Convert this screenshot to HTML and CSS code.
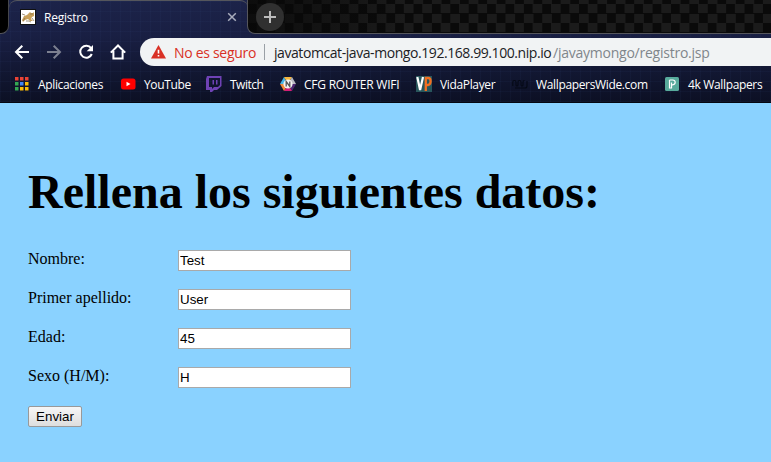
FILE: index.html
```html
<!DOCTYPE html>
<html lang="es">
<head>
<meta charset="utf-8">
<title>Registro</title>
<link rel="stylesheet" href="styles.css">
</head>
<body>
<header class="browser">
  <div class="tabstrip">
    <div class="corner left"></div>
    <div class="tab">
      <svg class="favicon" width="16" height="16" viewBox="0 0 16 16"><path fill="#111" d="M0 0h16v16H0z"/><path fill="#fff" d="M1 1h14v14H1z"/><path fill="#c9a15b" d="M2 11l2-4 3-1 2-2 1-1 1 1h2l1-1v4l-2 1-1 2 2 2h-3l-2-2-3 1-2 2z"/><path stroke="#7c6a4c" stroke-width=".7" fill="none" d="M2 5l3 1M5 9l-2 3M10 5h3M6 12h3l2 1M12 9l2 3"/></svg>
      <span class="tab-title">Registro</span>
      <svg class="close" width="10" height="10" viewBox="0 0 10 10"><path d="M1.2 1.2l7.6 7.6M8.8 1.2L1.2 8.8" stroke="#a9adbd" stroke-width="1.5"/></svg>
    </div>
    <div class="corner right"></div>
    <div class="newtab"><svg width="12" height="12" viewBox="0 0 12 12"><path d="M6 0v12M0 6h12" stroke="#bcbcbc" stroke-width="2"/></svg></div>
  </div>
  <div class="toolbar">
    <svg class="nav" width="16" height="16" viewBox="0 0 16 16"><path d="M15 8H2.5M8.3 1.7L2 8l6.3 6.3"/></svg>
    <svg class="nav dim" width="16" height="16" viewBox="0 0 16 16"><path d="M1 8h12.5M7.7 1.7L14 8l-6.3 6.3"/></svg>
    <svg class="nav" width="16" height="16" viewBox="0 0 16 16"><path d="M13.1 4.2A6 6 0 1 0 13.8 10"/><path class="solid" d="M15 1v6.3H8.7z"/></svg>
    <svg class="nav" width="16" height="16" viewBox="0 0 16 16"><path d="M.8 8.6L8 1.5l7.2 7.1M3.4 7v7.6h9.2V7"/></svg>
    <div class="omnibox">
      <svg class="warn" width="15" height="14" viewBox="0 0 15 14"><path fill="#d93025" d="M7.5 0L15 13.5H0z"/><path stroke="#fff" stroke-width="1.6" d="M7.5 4.8v3.6M7.5 10v1.6"/></svg>
      <span class="insecure">No es seguro</span>
      <span class="rule"></span>
      <span class="host">javatomcat-java-mongo.192.168.99.100.nip.io</span><span class="path">/javaymongo/registro.jsp</span>
    </div>
  </div>
  <nav class="bookmarks">
    <div class="bm"><svg width="16" height="16" viewBox="0 0 16 16"><path fill="#ea4335" d="M1 1h3.5v3.5H1zM6 1h3.5v3.5H6zM11 1h3.5v3.5H11z"/><path fill="#34a853" d="M1 6h3.5v3.5H1zM1 11h3.5v3.5H1z"/><path fill="#4285f4" d="M6 6h3.5v3.5H6z"/><path fill="#fbbc05" d="M11 6h3.5v3.5H11zM6 11h3.5v3.5H6zM11 11h3.5v3.5H11z"/></svg><span class="w66">Aplicaciones</span></div>
    <div class="bm"><svg width="16" height="16" viewBox="0 0 16 16"><rect x="1" y="2.5" width="14.5" height="11" rx="2.5" fill="#f00"/><path fill="#fff" d="M6.5 5.7v4.6L10.5 8z"/></svg><span class="w46">YouTube</span></div>
    <div class="bm"><svg width="16" height="16" viewBox="0 0 16 16"><path fill="#6f42b5" fill-rule="evenodd" d="M1 0h14.5v10L11 14H8l-2 2H4v-2H0V3zM3 2v9h3v2l2-2h4l2-2V2zM6.5 4H8v4.5H6.5zM10 4h1.5v4.5H10z"/></svg><span class="w34">Twitch</span></div>
    <div class="bm"><svg width="16" height="16" viewBox="0 0 16 16"><path fill="#45b6e8" d="M4 1L0 8h8z"/><path fill="#f5b63e" d="M4 1h8L8 8z"/><path fill="#b9bac2" d="M12 1l4 7H8z"/><path fill="#4b2872" d="M16 8l-4 7-4-7z"/><path fill="#d71c77" d="M12 15H4l4-7z"/><path fill="#f08a3c" d="M4 15L0 8h8z"/><circle cx="8" cy="8" r="4.6" fill="#f4f4f4"/><path d="M6.2 10.5v-5l3.6 5v-5" fill="none" stroke="#555" stroke-width="1.3"/></svg><span class="w96">CFG ROUTER WIFI</span></div>
    <div class="bm"><svg width="16" height="16" viewBox="0 0 16 16"><path fill="#28565c" d="M0 0h16v16H0z"/><path d="M1.3 1l2.8 13L7 1" fill="none" stroke="#fff" stroke-width="2.2"/><path d="M9.8 15V2h2.4q2.4 0 2.4 3.2T12.2 9H10" fill="none" stroke="#f36f21" stroke-width="2.3"/></svg><span class="w56">VidaPlayer</span></div>
    <div class="bm"><svg width="16" height="16" viewBox="0 0 16 16"><path d="M.8 10V6q0-1.5 1.6-1.5T4 6v3q0 1 1 1t1-1V6q0-1.5 1.5-1.5T9 6v3q0 1 1 1t1-1V6q0-1.5 1.5-1.5M15 5v5q0 2-2 2H3" fill="none" stroke="#050915" stroke-width="1.1"/></svg><span class="w112">WallpapersWide.com</span></div>
    <div class="bm"><svg width="16" height="16" viewBox="0 0 16 16"><rect x="1" y="1" width="14" height="14" rx="1.5" fill="#58ab9c"/><path d="M5.5 4h3.2q2.5 0 2.5 2.3T8.7 8.8H7.4M5.5 4v8h2V6.5" fill="none" stroke="#fff" stroke-width="1.2"/></svg><span class="w75">4k Wallpapers</span></div>
  </nav>
</header>
<main class="page">
  <h1>Rellena los siguientes datos:</h1>
  <form>
    <div class="field"><label for="n">Nombre:</label><input id="n" type="text" value="Test"></div>
    <div class="field"><label for="a">Primer apellido:</label><input id="a" type="text" value="User"></div>
    <div class="field"><label for="e">Edad:</label><input id="e" type="text" value="45"></div>
    <div class="field"><label for="s">Sexo (H/M):</label><input id="s" type="text" value="H"></div>
    <button type="button">Enviar</button>
  </form>
</main>
</body>
</html>
```
FILE: styles.css
```css
* { box-sizing: border-box; }
html { overflow: hidden; }
body {
  margin: 0;
  height: 462px;
  overflow: hidden;
  background: #8ad2ff;
  font-family: "Liberation Serif", serif;
}
.browser {
  height: 103px;
  font-family: "Open Sans", "Noto Sans", sans-serif;
  white-space: nowrap;
  background:
    repeating-linear-gradient(90deg, rgba(70, 100, 160, .06) 0 1px, transparent 1px 10px),
    repeating-linear-gradient(0deg, rgba(70, 100, 160, .06) 0 1px, transparent 1px 10px),
    linear-gradient(#1c2349, #191f43 35%, #0c1024);
  border-bottom: 1px solid #050711;
}
.tabstrip {
  height: 34px;
  display: flex;
}
.corner.left {
  width: 9px;
  background: #000;
  border-right: 1px solid #45464c;
  border-bottom: 1px solid #55565c;
  border-bottom-right-radius: 8px;
}
.tab {
  width: 239px;
  display: flex;
  align-items: center;
  padding: 0 11px 1px 11px;
  border-top: 1px solid #55565c;
  border-radius: 8px 8px 0 0;
}
.tab-title {
  margin-left: 8px;
  flex: 1;
  color: #fff;
  font-size: 12px;
  letter-spacing: -.25px;
}
.corner.right {
  position: absolute;
  left: 247px;
  right: 0;
  top: 0;
  height: 34px;
  border-left: 1px solid #55565c;
  border-bottom: 1px solid #55565c;
  border-bottom-left-radius: 8px;
  background-image:
    linear-gradient(90deg, rgba(8, 8, 8, .75), rgba(8, 8, 8, 0) 160px),
    conic-gradient(#1b1b1b 25%, #0a0a0a 0 50%, #1b1b1b 0 75%, #0a0a0a 0);
  background-size: auto, 18.4px 19px;
  background-position: 0 0, 0 4px;
}
.newtab {
  position: relative;
  margin: 3px 0 0 8px;
  width: 28px;
  height: 28px;
  border-radius: 50%;
  background: #303030;
  display: flex;
  align-items: center;
  justify-content: center;
}
.toolbar {
  height: 36px;
  padding: 4px 0 4px 14px;
  display: flex;
  align-items: center;
  gap: 16px;
}
.nav {
  flex: none;
  fill: none;
  stroke: #fff;
  stroke-width: 2;
}
.nav.dim { stroke: #7c8090; }
.nav .solid { fill: #fff; stroke: none; }
.omnibox {
  margin-left: -2px;
  flex: 1;
  height: 28px;
  display: flex;
  align-items: center;
  padding-left: 11px;
  border-radius: 14px 0 0 14px;
  background: #f1f3f4;
  font-size: 14px;
}
.insecure {
  width: 82px;
  margin-left: 8px;
  color: #d93025;
  letter-spacing: -.3px;
}
.rule {
  width: 1px;
  height: 16px;
  margin: 0 9px 0 8px;
  background: #9aa0a6;
}
.host {
  width: 279px;
  color: #202124;
  letter-spacing: -.43px;
}
.path {
  color: #80868b;
  letter-spacing: -.24px;
}
.bookmarks {
  height: 28px;
  padding-left: 14px;
  display: flex;
  align-items: center;
  gap: 16px;
}
.bm {
  display: flex;
  align-items: center;
  gap: 8px;
  color: #fff;
  font-size: 12px;
  letter-spacing: -.35px;
}
.bm svg { flex: none; }
.w66 { width: 66px; }
.w46 { width: 46px; }
.w34 { width: 34px; letter-spacing: -.5px; }
.w96 { width: 96px; letter-spacing: -.23px; }
.w56 { width: 56px; }
.w112 { width: 112px; }
.w75 { width: 75px; }
.page { padding: 61px 28px 0; }
h1 {
  margin: 0 0 31px;
  font-size: 48px;
  line-height: 55px;
  font-weight: bold;
  white-space: nowrap;
}
.field {
  display: flex;
  height: 21px;
  margin-bottom: 18px;
}
label {
  width: 150px;
  font-size: 16px;
  line-height: 18px;
}
input {
  width: 173px;
  height: 21px;
  padding: 1px;
  border: 1px solid #a9a9a9;
  background: #fff;
  color: #000;
  font: 13.33px "Liberation Sans", sans-serif;
}
button {
  display: block;
  width: 54px;
  height: 21px;
  padding: 0;
  border: 1px solid #999;
  border-radius: 2px;
  background: linear-gradient(#f6f6f6, #dedede);
  color: #000;
  font: 13.33px "Liberation Sans", sans-serif;
}
```
